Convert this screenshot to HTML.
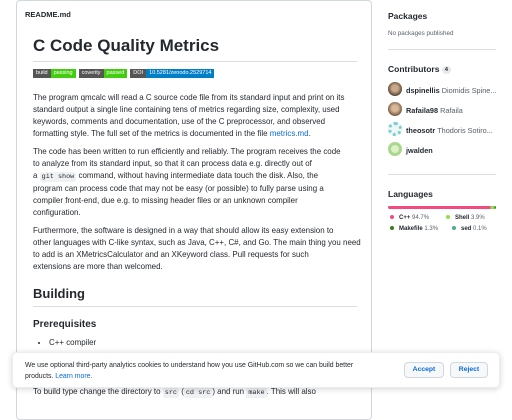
<!DOCTYPE html>
<html><head><style>
*{margin:0;padding:0;box-sizing:border-box}
body{width:512px;height:400px;overflow:hidden;background:#fff;font-family:"Liberation Sans",sans-serif;color:#24292f;position:relative}
.readme{position:absolute;left:16px;top:0;width:356px;height:420px;border:1px solid #d0d7de;border-radius:4px}
.hd{position:absolute;left:8px;top:9px;font-size:7.5px;font-weight:bold}
.body{position:absolute;left:16px;top:34px;width:324px}
h1{font-size:17px;font-weight:600;height:27px;border-bottom:1px solid #d8dee4;line-height:22px}
.badges{margin-top:7px;height:10px;display:flex;gap:3px;font-size:5.5px;color:#fff}
.badges span{display:inline-block;height:9px;line-height:9px;padding:0 3px}
p{font-size:7.95px;line-height:12px;margin-top:6px;white-space:nowrap}
p.first{margin-top:13px}
code{font-family:"Liberation Mono",monospace;background:#eff1f3;font-size:6.8px;padding:1px 2px;border-radius:2px}
a{color:#0969da;text-decoration:none}
h2{font-size:13px;font-weight:600;margin-top:13px;padding-bottom:5px;border-bottom:1px solid #d8dee4}
h3{font-size:10px;font-weight:600;margin-top:12px}
ul{font-size:7.95px;margin-top:8px;margin-left:16px}
.side{position:absolute;left:388px;width:108px}
.st{font-size:8.5px;font-weight:600}
.sm{font-size:6.3px;color:#57606a}
.hr{position:absolute;left:388px;width:108px;border-top:1px solid #d8dee4}
.av{position:absolute;left:388px;width:14px;height:14px;border-radius:50%}
.cn{position:absolute;left:406px;font-size:7.3px;font-weight:600;white-space:nowrap}
.cn span{font-weight:normal;color:#57606a}
.lg{position:absolute;font-size:6px;white-space:nowrap}
.lg i{display:inline-block;width:4px;height:4px;border-radius:50%;margin-right:5px;vertical-align:middle}
.banner{position:absolute;left:12px;top:352px;width:488px;height:36px;background:#fff;border-radius:5px;box-shadow:0 1px 6px rgba(0,0,0,.18);border:1px solid #eaeef2}
.banner .t{position:absolute;left:12px;top:7px;font-size:6.9px;line-height:11px;width:350px}
.btn{position:absolute;top:9px;height:16px;border:1px solid #d0d7de;border-radius:4px;background:#f6f8fa;color:#0969da;font-size:6.8px;font-weight:600;text-align:center;line-height:14px}
</style></head><body>
<div class="readme">
<div class="hd">README.md</div>
<div class="body">
<h1>C Code Quality Metrics</h1>
<div class="badges"><div><span style="background:#555">build</span><span style="background:#4c1">passing</span></div><div><span style="background:#555">coverity</span><span style="background:#4c1">passed</span></div><div><span style="background:#555">DOI</span><span style="background:#007ec6">10.5281/zenodo.2529714</span></div></div>
<p class="first">The program qmcalc will read a C source code file from its standard input and print on its<br>standard output a single line containing tens of metrics regarding size, complexity, used<br>keywords, comments and documentation, use of the C preprocessor, and observed<br>formatting style. The full set of the metrics is documented in the file <a>metrics.md</a>.</p>
<p>The code has been written to run efficiently and reliably. The program receives the code<br>to analyze from its standard input, so that it can process data e.g. directly out of<br>a <code>git show</code> command, without having intermediate data touch the disk. Also, the<br>program can process code that may not be easy (or possible) to fully parse using a<br>compiler front-end, due e.g. to missing header files or an unknown compiler<br>configuration.</p>
<p>Furthermore, the software is designed in a way that should allow its easy extension to<br>other languages with C-like syntax, such as Java, C++, C#, and Go. The main thing you need<br>to add is an XMetricsCalculator and an XKeyword class. Pull requests for such<br>extensions are more than welcomed.</p>
<h2>Building</h2>
<h3>Prerequisites</h3>
<ul><li>C++ compiler</li></ul>
<p style="margin-top:39px">To build type change the directory to <code>src</code> (<code>cd src</code>) and run <code>make</code>. This will also</p>
</div>
</div>

<div class="side st" style="top:11px">Packages</div>
<div class="side sm" style="top:30px">No packages published</div>
<div class="hr" style="top:49px"></div>
<div class="side st" style="top:64px">Contributors <span style="display:inline-block;background:#e6e8eb;border-radius:6px;font-size:5.5px;padding:1px 3px;font-weight:600;vertical-align:middle">4</span></div>
<div class="av" style="top:82px;background:radial-gradient(circle at 50% 45%,#c9a88a 30%,#5a4636 70%)"></div>
<div class="cn" style="top:86px">dspinellis <span>Diomidis Spine...</span></div>
<div class="av" style="top:102px;background:radial-gradient(circle at 50% 45%,#d8b69a 30%,#7a5a40 70%)"></div>
<div class="cn" style="top:106px">Rafaila98 <span>Rafaila</span></div>
<div class="av" style="top:122px;background:#eef6f6;border:3px dotted #7ccfcf"></div>
<div class="cn" style="top:126px">theosotr <span>Thodoris Sotiro...</span></div>
<div class="av" style="top:142px;background:#dcefc8;border:3px solid #a8d88a"></div>
<div class="cn" style="top:146px">jwalden</div>
<div class="hr" style="top:174px"></div>
<div class="side st" style="top:189px">Languages</div>
<div style="position:absolute;left:388px;top:206px;width:108px;height:3px;border-radius:2px;background:linear-gradient(90deg,#f34b7d 0 94.7%,#89e051 94.7% 98.6%,#427819 98.6% 99.9%,#4cb380 99.9%)"></div>
<div class="lg" style="left:390px;top:215px"><i style="background:#f34b7d"></i><b>C++</b> <span style="color:#57606a">94.7%</span></div>
<div class="lg" style="left:446px;top:215px"><i style="background:#89e051"></i><b>Shell</b> <span style="color:#57606a">3.9%</span></div>
<div class="lg" style="left:390px;top:226px"><i style="background:#427819"></i><b>Makefile</b> <span style="color:#57606a">1.3%</span></div>
<div class="lg" style="left:452px;top:226px"><i style="background:#4cb380"></i><b>sed</b> <span style="color:#57606a">0.1%</span></div>

<div class="banner">
<div class="t">We use optional third-party analytics cookies to understand how you use GitHub.com so we can build better products. <a>Learn more</a>.</div>
<div class="btn" style="left:391px;width:40px">Accept</div>
<div class="btn" style="left:437px;width:38px">Reject</div>
</div>
</body></html>
